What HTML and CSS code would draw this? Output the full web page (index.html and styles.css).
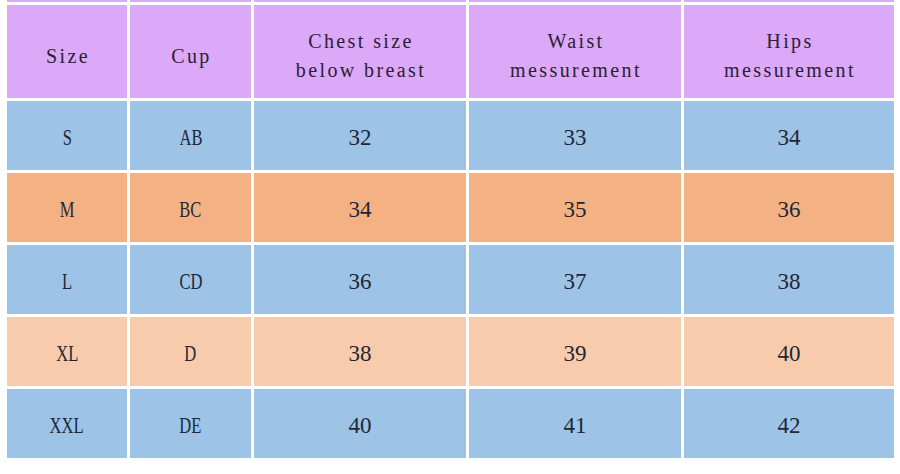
FILE: index.html
```html
<!DOCTYPE html>
<html>
<head>
<meta charset="utf-8">
<link rel="stylesheet" href="styles.css">
</head>
<body>
<div class="table">
  <div class="cell pink strip"></div><div class="cell pink strip"></div><div class="cell pink strip"></div><div class="cell pink strip"></div><div class="cell pink strip"></div>

  <div class="cell pink head">Size</div>
  <div class="cell pink head">Cup</div>
  <div class="cell pink head">Chest size<br>below breast</div>
  <div class="cell pink head">Waist<br>messurement</div>
  <div class="cell pink head">Hips<br>messurement</div>

  <div class="cell blue"><span class="nar">S</span></div>
  <div class="cell blue"><span class="nar">AB</span></div>
  <div class="cell blue">32</div>
  <div class="cell blue">33</div>
  <div class="cell blue">34</div>

  <div class="cell orange"><span class="nar">M</span></div>
  <div class="cell orange"><span class="nar">BC</span></div>
  <div class="cell orange">34</div>
  <div class="cell orange">35</div>
  <div class="cell orange">36</div>

  <div class="cell blue"><span class="nar">L</span></div>
  <div class="cell blue"><span class="nar">CD</span></div>
  <div class="cell blue">36</div>
  <div class="cell blue">37</div>
  <div class="cell blue">38</div>

  <div class="cell peach"><span class="nar">XL</span></div>
  <div class="cell peach"><span class="nar">D</span></div>
  <div class="cell peach">38</div>
  <div class="cell peach">39</div>
  <div class="cell peach">40</div>

  <div class="cell blue"><span class="nar">XXL</span></div>
  <div class="cell blue"><span class="nar">DE</span></div>
  <div class="cell blue">40</div>
  <div class="cell blue">41</div>
  <div class="cell blue">42</div>
</div>
</body>
</html>
```

FILE: styles.css
```css
html, body {
  margin: 0;
  padding: 0;
  background: #ffffff;
}

.table {
  display: grid;
  grid-template-columns: 120px 121px 212px 212px 210px;
  grid-template-rows: 2px 93px repeat(5, 69px);
  gap: 3px;
  padding-left: 7px;
  font-family: "Liberation Serif", serif;
  font-size: 23px;
  color: #1f2736;
}

.cell {
  display: flex;
  align-items: center;
  justify-content: center;
  text-align: center;
  padding-top: 4px;
  box-sizing: border-box;
}

.strip {
  padding: 0;
}

.head {
  font-family: "Liberation Serif", serif;
  font-size: 20px;
  letter-spacing: 2.4px;
  line-height: 29px;
  color: #2a2035;
  padding-top: 9px;
  padding-left: 2px;
}

.nar {
  display: inline-block;
  transform: scaleX(0.72);
}

.pink { background: #dca8f8; }
.blue { background: #9dc3e6; }
.orange { background: #f4b183; }
.peach { background: #f8cbad; }
```
